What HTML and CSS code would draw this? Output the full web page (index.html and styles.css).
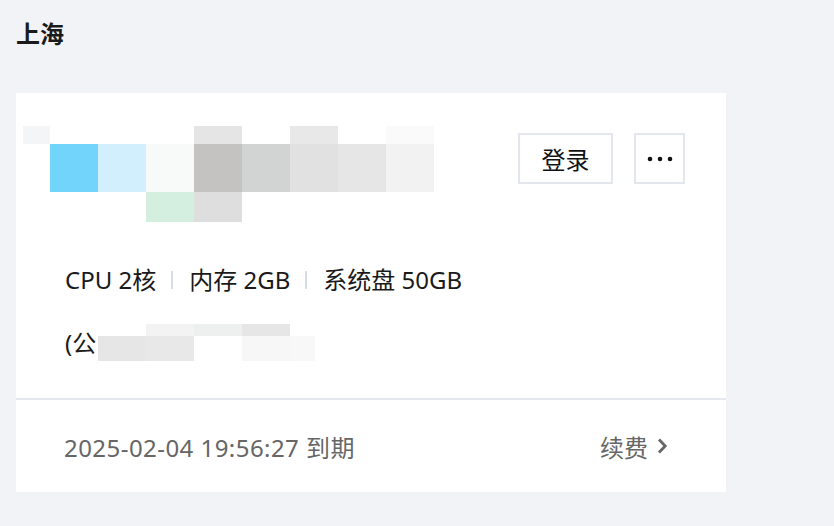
FILE: index.html
```html
<!DOCTYPE html>
<html lang="zh-CN">
<head>
<meta charset="utf-8">
<title>上海</title>
<link rel="stylesheet" href="styles.css">
</head>
<body>
<h1 class="region-title">上海</h1>
<section class="card">
  <div class="card-main">
    <div class="card-head">
      <svg class="mosaic" width="411" height="96" viewBox="0 0 411 96" aria-label="实例名称">
        <rect x="0" y="0" width="27" height="18" fill="#f4f5f7"/>
        <rect x="171" y="0" width="48" height="18" fill="#e5e5e5"/>
        <rect x="267" y="0" width="48" height="18" fill="#e8e8e8"/>
        <rect x="363" y="0" width="48" height="18" fill="#fafafa"/>
        <rect x="27" y="18" width="48" height="48" fill="#72d4fa"/>
        <rect x="75" y="18" width="48" height="48" fill="#d1effc"/>
        <rect x="123" y="18" width="48" height="48" fill="#f8faf9"/>
        <rect x="171" y="18" width="48" height="48" fill="#c4c3c2"/>
        <rect x="219" y="18" width="48" height="48" fill="#d2d3d3"/>
        <rect x="267" y="18" width="48" height="48" fill="#e1e1e1"/>
        <rect x="315" y="18" width="48" height="48" fill="#e6e6e6"/>
        <rect x="363" y="18" width="48" height="48" fill="#f2f2f2"/>
        <rect x="123" y="66" width="48" height="30" fill="#d4efe0"/>
        <rect x="171" y="66" width="48" height="30" fill="#dedede"/>
      </svg>
      <div class="actions">
        <button class="btn btn-login">登录</button>
        <button class="btn btn-more" aria-label="更多">
          <svg width="26" height="6" viewBox="0 0 26 6"><circle cx="3" cy="3" r="2.3" fill="#111"/><circle cx="13" cy="3" r="2.3" fill="#111"/><circle cx="23" cy="3" r="2.3" fill="#111"/></svg>
        </button>
      </div>
    </div>
    <div class="specs">
      <span>CPU 2核</span><i class="sep"></i><span>内存 2GB</span><i class="sep"></i><span>系统盘 50GB</span>
    </div>
    <div class="ip-line">
      <span>(公</span>
      <svg class="ip-mosaic" width="217" height="37" viewBox="0 0 217 37" aria-label="IP地址">
        <rect x="48" y="0" width="48" height="12" fill="#f3f3f3"/>
        <rect x="96" y="0" width="48" height="12" fill="#eef0ef"/>
        <rect x="144" y="0" width="48" height="12" fill="#e5e6e5"/>
        <rect x="0" y="12" width="48" height="25" fill="#e6e6e6"/>
        <rect x="48" y="12" width="48" height="25" fill="#e8e8e8"/>
        <rect x="144" y="12" width="48" height="25" fill="#f7f7f7"/>
        <rect x="192" y="12" width="25" height="25" fill="#f8f8f8"/>
      </svg>
    </div>
  </div>
  <div class="card-foot">
    <span class="expire">2025-02-04 19:56:27 到期</span>
    <a class="renew" href="#">续费<svg width="12" height="18" viewBox="0 0 12 18"><path d="M3 2.5 L9.2 9 L3 15.5" fill="none" stroke="#666" stroke-width="2.8"/></svg></a>
  </div>
</section>
</body>
</html>
```

FILE: styles.css
```css
* { box-sizing: border-box; }
body {
  margin: 0;
  background: #f2f3f7;
  font-family: "Noto Sans", "Noto Sans CJK SC", sans-serif;
  color: #1f1f1f;
  width: 834px;
  height: 526px;
  overflow: hidden;
}
.region-title {
  margin: 0;
  padding: 16px 0 0 16px;
  font-size: 24px;
  line-height: 36px;
  font-weight: 700;
  color: #1a1a1a;
}
.card {
  margin: 41px 0 0 16px;
  width: 710px;
  height: 399px;
  background: #fff;
  display: flex;
  flex-direction: column;
}
.card-main {
  height: 307px;
  padding: 33px 41px 0 7px;
  border-bottom: 2px solid #e5e8ef;
}
.card-head {
  display: flex;
  justify-content: space-between;
  align-items: flex-start;
}
.mosaic { display: block; }
.actions {
  display: flex;
  gap: 21px;
  margin-top: 7px;
}
.btn {
  background: #fff;
  border: 2px solid #e3e6ec;
  height: 51px;
  padding: 0;
  font-family: inherit;
  color: #111;
  display: flex;
  align-items: center;
  justify-content: center;
}
.btn-login { width: 95px; font-size: 24px; }
.btn-more { width: 51px; }
.specs {
  margin: 42px 0 0 42px;
  display: flex;
  align-items: center;
  font-size: 24px;
  line-height: 32px;
  color: #1a1a1a;
}
.sep {
  display: block;
  width: 2px;
  height: 18px;
  background: #d8dce3;
  margin: 0 16px 0 15px;
}
.ip-line {
  margin: 28px 0 0 42px;
  display: flex;
  align-items: center;
  font-size: 24px;
  line-height: 32px;
  color: #1a1a1a;
}
.ip-mosaic { display: block; margin-left: 2px; }
.card-foot {
  flex: 1;
  display: flex;
  align-items: center;
  justify-content: space-between;
  padding: 0 58px 0 48px;
  font-size: 24px;
  color: #666;
}
.expire { letter-spacing: 0.45px; }
.renew {
  color: #666;
  text-decoration: none;
  display: flex;
  align-items: center;
  gap: 8px;
}
.renew svg { display: block; }
```
